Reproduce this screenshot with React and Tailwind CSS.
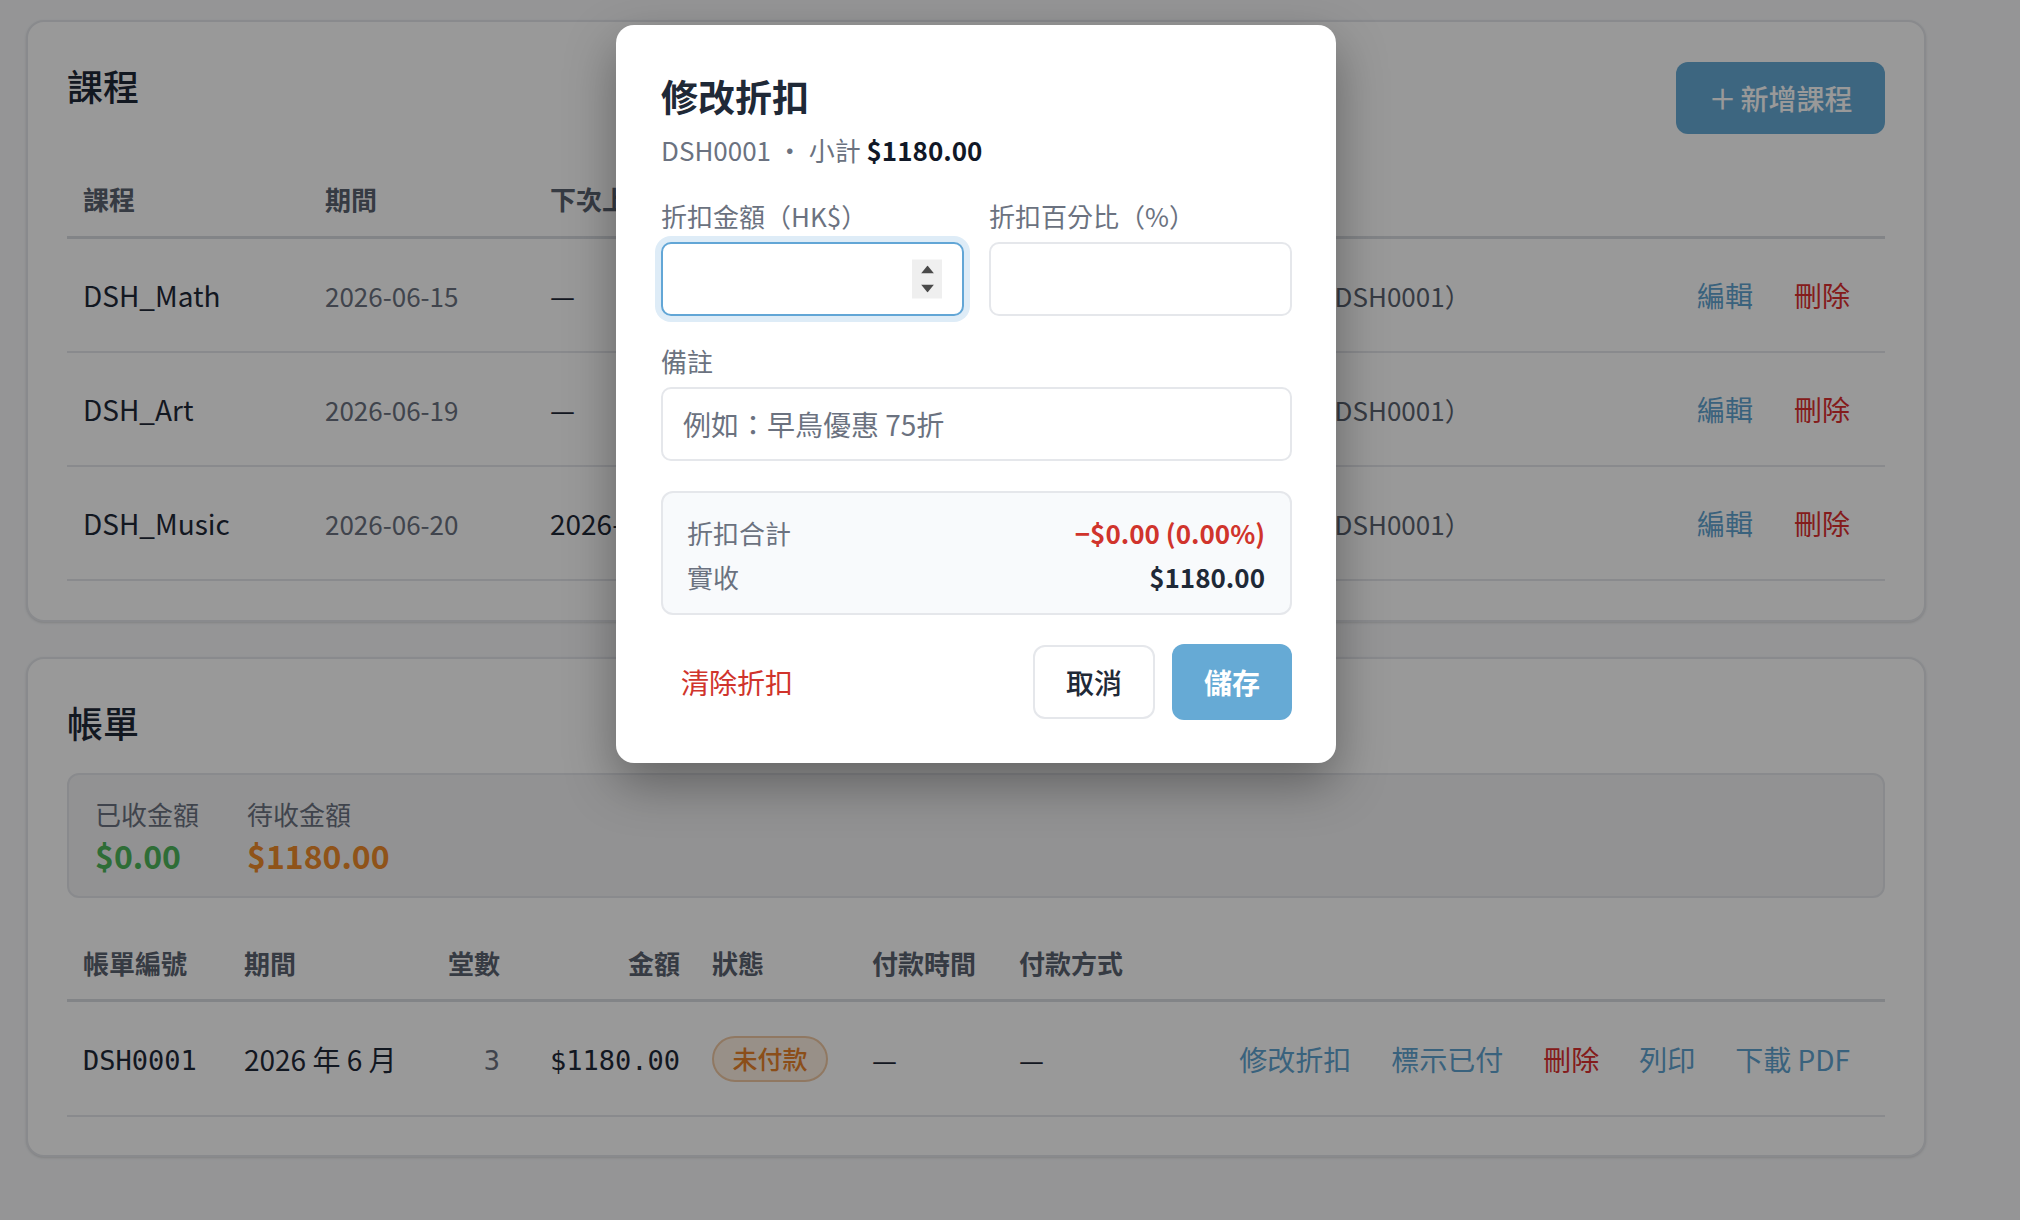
import React from "react";

const courses = [
  { name: "DSH_Math", start: "2026-06-15", next: "—", count: "1", bill: "2026 年 6 月（DSH0001）" },
  { name: "DSH_Art", start: "2026-06-19", next: "—", count: "1", bill: "2026 年 6 月（DSH0001）" },
  { name: "DSH_Music", start: "2026-06-20", next: "2026-06-27", count: "1", bill: "2026 年 6 月（DSH0001）" },
];

const billActions = [
  { label: "修改折扣", danger: false },
  { label: "標示已付", danger: false },
  { label: "刪除", danger: true },
  { label: "列印", danger: false },
  { label: "下載 PDF", danger: false },
];

const courseCols = "grid grid-cols-[242px_225px_286px_331px_409px_1fr]";
const billCols = "grid grid-cols-[161px_172px_116px_180px_160px_147px_177px_1fr]";
const mono = "font-['DejaVu_Sans_Mono',monospace] text-[27px] pt-[6px]";

function Card({ children, className = "" }) {
  return (
    <section
      className={
        "w-[1900px] rounded-[18px] border-2 border-[#e5e7eb] bg-white px-[39px] pt-[40px] shadow-sm " +
        className
      }
    >
      {children}
    </section>
  );
}

function CoursesCard() {
  return (
    <Card className="pb-[39px]">
      <div className="flex items-start justify-between">
        <h2 className="text-[36px] font-medium leading-[46px] text-[#1f2937]">課程</h2>
        <button className="flex h-[72px] w-[209px] items-center justify-center rounded-[12px] bg-[#66aad5] text-[28px] font-medium text-white">
          <span className="mr-[4px]">＋</span>新增課程
        </button>
      </div>

      <div className="mt-[29px]">
        <div
          className={
            courseCols +
            " h-[76px] items-center border-b-[3px] border-[#d9dce1] pb-[2px] text-[26px] font-bold text-[#5b6370]"
          }
        >
          <div className="px-[16px]">課程</div>
          <div className="px-[16px]">期間</div>
          <div className="whitespace-nowrap px-[16px]">下次上課</div>
          <div className="px-[16px]">堂數</div>
          <div className="px-[16px]">帳單</div>
          <div />
        </div>
        {courses.map((c) => (
          <div
            key={c.name}
            className={courseCols + " h-[114px] items-center border-b-2 border-[#e5e7eb] text-[28px]"}
          >
            <div className="px-[16px] text-[#1f2937]">{c.name}</div>
            <div className="px-[16px] text-[26px] text-[#6b7280]">{c.start}</div>
            <div className="whitespace-nowrap px-[16px] text-[#1f2937]">{c.next}</div>
            <div className="px-[16px] text-[#1f2937]">{c.count}</div>
            <div className="whitespace-nowrap px-[16px] text-[26px] text-[#5b6370]">{c.bill}</div>
            <div className="flex justify-end gap-[41px] pr-[35px]">
              <button className="text-[#5fa3d0]">編輯</button>
              <button className="text-[#dc2f2f]">刪除</button>
            </div>
          </div>
        ))}
      </div>
    </Card>
  );
}

function BillsCard() {
  return (
    <Card className="mt-[35px] pb-[38px]">
      <h2 className="text-[36px] font-medium leading-[46px] text-[#1f2937]">帳單</h2>

      <div className="mt-[28px] flex gap-[48px] rounded-[12px] border-2 border-[#e5e7eb] bg-[#f3f4f6] px-[26px] pb-[19px] pt-[20px]">
        <div>
          <div className="text-[26px] leading-[38px] text-[#6b7280]">已收金額</div>
          <div className="text-[32px] font-semibold leading-[44px] text-[#4db65a]">$0.00</div>
        </div>
        <div>
          <div className="text-[26px] leading-[38px] text-[#6b7280]">待收金額</div>
          <div className="text-[32px] font-semibold leading-[44px] text-[#ef8a2a]">$1180.00</div>
        </div>
      </div>

      <div className="mt-[28px]">
        <div
          className={
            billCols +
            " h-[76px] items-center border-b-[3px] border-[#d9dce1] text-[26px] font-bold text-[#5b6370]"
          }
        >
          <div className="px-[16px]">帳單編號</div>
          <div className="px-[16px]">期間</div>
          <div className="px-[16px] text-right">堂數</div>
          <div className="px-[16px] text-right">金額</div>
          <div className="px-[16px]">狀態</div>
          <div className="px-[16px]">付款時間</div>
          <div className="px-[16px]">付款方式</div>
          <div />
        </div>
        <div className={billCols + " h-[115px] items-center border-b-2 border-[#e5e7eb] text-[28px]"}>
          <div className={"px-[16px] text-[#1f2937] " + mono}>DSH0001</div>
          <div className="whitespace-nowrap px-[16px] text-[#1f2937]">2026 年 6 月</div>
          <div className={"px-[16px] text-right text-[#6b7280] " + mono}>3</div>
          <div className={"px-[16px] text-right text-[#1f2937] " + mono}>$1180.00</div>
          <div className="px-[16px]">
            <span className="inline-flex h-[46px] w-[116px] items-center justify-center rounded-full border-2 border-[#f0c9a3] bg-[#fdf0e3] text-[25px] font-medium text-[#e8832a]">
              未付款
            </span>
          </div>
          <div className="px-[16px] text-[#1f2937]">—</div>
          <div className="px-[16px] text-[#1f2937]">—</div>
          <div className="flex justify-end gap-[40px] pr-[35px]">
            {billActions.map((a) => (
              <button key={a.label} className={a.danger ? "text-[#dc2f2f]" : "text-[#5fa3d0]"}>
                {a.label}
              </button>
            ))}
          </div>
        </div>
      </div>
    </Card>
  );
}

function Spinner() {
  return (
    <div className="absolute right-[22px] top-1/2 flex h-[39px] w-[30px] -translate-y-1/2 flex-col items-center justify-center gap-[11px] bg-[#efefef]">
      <svg width="13" height="8" viewBox="0 0 13 8">
        <path d="M6.5 0 13 8H0z" fill="#4a4a4a" />
      </svg>
      <svg width="13" height="8" viewBox="0 0 13 8">
        <path d="M0 0h13L6.5 8z" fill="#4a4a4a" />
      </svg>
    </div>
  );
}

function DiscountDialog() {
  return (
    <div className="absolute left-[616px] top-[25px] w-[720px] rounded-[18px] bg-white pb-[43px] pl-[45px] pr-[44px] pt-[45px] shadow-[0_20px_50px_rgba(0,0,0,0.35)]">
      <h3 className="text-[37px] font-bold leading-[52px] text-[#1f2937]">修改折扣</h3>
      <p className="mt-[10px] text-[26px] leading-[36px] text-[#6b7280]">
        DSH0001 ・ 小計 <span className="font-bold text-[#111827]">$1180.00</span>
      </p>

      <div className="mt-[30px] grid grid-cols-2 gap-[25px]">
        <label className="block">
          <span className="mb-[8px] block text-[26px] leading-[36px] text-[#6b7280]">折扣金額（HK$）</span>
          <div className="relative">
            <input
              type="text"
              className="block h-[74px] w-full rounded-[10px] border-2 border-[#62a6d6] bg-white px-[20px] text-[26px] shadow-[0_0_0_6px_#deecf7] outline-none"
            />
            <Spinner />
          </div>
        </label>
        <label className="block">
          <span className="mb-[8px] block text-[26px] leading-[36px] text-[#6b7280]">折扣百分比（%）</span>
          <input
            type="text"
            className="block h-[74px] w-full rounded-[10px] border-2 border-[#e5e7eb] bg-white px-[20px] text-[26px] outline-none"
          />
        </label>
      </div>

      <label className="mt-[27px] block">
        <span className="mb-[8px] block text-[26px] leading-[36px] text-[#6b7280]">備註</span>
        <input
          type="text"
          placeholder="例如：早鳥優惠 75折"
          className="block h-[74px] w-full rounded-[10px] border-2 border-[#e5e7eb] bg-white px-[20px] text-[28px] text-[#1f2937] outline-none placeholder:text-[#6b7280]"
        />
      </label>

      <div className="mt-[30px] flex flex-col gap-[4px] rounded-[12px] border-2 border-[#e5e7eb] bg-[#f8fafc] pb-[16px] pl-[24px] pr-[25px] pt-[20px] text-[26px] leading-[40px]">
        <div className="flex justify-between">
          <span className="text-[#6b7280]">折扣合計</span>
          <span className="font-semibold text-[#d0342c]">−$0.00 (0.00%)</span>
        </div>
        <div className="flex justify-between">
          <span className="text-[#6b7280]">實收</span>
          <span className="font-bold text-[#1f2937]">$1180.00</span>
        </div>
      </div>

      <div className="mt-[29px] flex items-center">
        <button className="px-[20px] text-[28px] text-[#d0342c]">清除折扣</button>
        <div className="ml-auto flex items-center gap-[17px]">
          <button className="h-[74px] w-[122px] rounded-[12px] border-2 border-[#e5e7eb] bg-white text-[28px] font-medium text-[#1f2937]">
            取消
          </button>
          <button className="h-[76px] w-[120px] rounded-[12px] bg-[#66aad5] text-[28px] font-semibold text-white">
            儲存
          </button>
        </div>
      </div>
    </div>
  );
}

export default function App() {
  return (
    <div className="relative min-h-[1220px] w-[2020px] overflow-hidden bg-[#f8f9fb] pl-[26px] pt-[20px] font-['Noto_Sans_CJK_TC','Noto_Sans',sans-serif]">
      <CoursesCard />
      <BillsCard />
      <div className="absolute inset-0 bg-black/40" />
      <DiscountDialog />
    </div>
  );
}
